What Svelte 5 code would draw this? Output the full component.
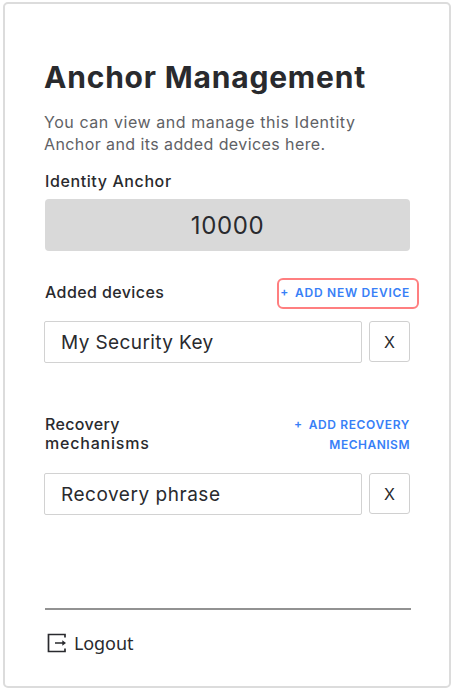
<script>
  const sections = [
    { id: 'devices', title: ['Added devices'], action: ['ADD NEW DEVICE'], item: 'My Security Key', highlighted: true },
    { id: 'recovery', title: ['Recovery', 'mechanisms'], action: ['ADD RECOVERY', 'MECHANISM'], item: 'Recovery phrase', highlighted: false }
  ];
</script>

<main class="card">
  <h1>Anchor Management</h1>
  <p class="intro"><span class="intro-a">You can view and manage this Identity</span><br /><span class="intro-b">Anchor and its added devices here.</span></p>
  <h2 class="anchor-label"><span>Identity Anchor</span></h2>
  <div class="anchor"><span>10000</span></div>

  {#each sections as section}
    <section class={section.id}>
      <header>
        <h2>{#each section.title as line}<span>{line}</span>{/each}</h2>
        <button class="add" class:highlighted={section.highlighted}>
          <i>+</i>
          <b>{#each section.action as line}<span>{line}</span>{/each}</b>
        </button>
      </header>
      <div class="row">
        <div class="item"><span>{section.item}</span></div>
        <button class="remove" aria-label="Remove">X</button>
      </div>
    </section>
  {/each}

  <footer>
    <svg width="20" height="20" viewBox="0 0 20 20" fill="none" stroke="#292a2e" stroke-width="1.7">
      <path d="M18 4.6V1.5H1.5v17H18v-3.1M8 10h8" />
      <path d="M15.3 7.2L19 10l-3.7 2.8z" fill="#292a2e" stroke="none" />
    </svg>
    <span>Logout</span>
  </footer>
</main>

<style>
  :global(body) { background: #fff; }
  * { box-sizing: border-box; }
  .card {
    width: 448px;
    height: 686px;
    margin: 2px 0 0 3px;
    padding: 54px 38px 0 40px;
    border: 2px solid #dcdcdc;
    border-radius: 5px;
    background: #fff;
    color: #292a2e;
    font-family: Inter, "Liberation Sans", sans-serif;
    display: flex;
    flex-direction: column;
  }
  h1, h2, p { margin: 0; white-space: nowrap; }
  h1 { height: 40px; line-height: 39px; font-size: 30px; font-weight: 700; letter-spacing: 0.8px; margin-left: -1px; }
  .intro { margin-top: 13px; height: 44px; font-size: 16px; line-height: 22px; font-weight: 400; color: #606165; letter-spacing: 0.56px; margin-left: -1px; }
  .intro-b { letter-spacing: 0.41px; }
  h2 { font-size: 16px; font-weight: 500; line-height: 19px; letter-spacing: 0.6px; }
  h2 span { display: block; }
  .anchor-label { margin-top: 17px; height: 27px; letter-spacing: 0.6px; }
  .anchor {
    width: 365px;
    height: 52px;
    flex: none;
    border-radius: 4px;
    background: #d9d9d9;
    display: flex;
    align-items: center;
    justify-content: center;
    font-size: 24px;
    font-weight: 400;
    letter-spacing: 0.6px;
  }
  section { width: 365px; }
  .devices { margin-top: 32px; }
  .devices h2 { letter-spacing: 0.4px; }
  .recovery { margin-top: 52px; }
  .recovery h2 span:first-child { letter-spacing: 0.35px; }
  .recovery h2 span:last-child { letter-spacing: 0.8px; }
  header { display: flex; justify-content: space-between; align-items: flex-start; }
  .devices header { height: 38px; }
  .recovery header { height: 58px; }
  button { font-family: inherit; padding: 0; background: none; color: inherit; }
  .add {
    display: flex;
    color: #387ff7;
    border: 1px solid transparent;
    height: 30px;
    padding: 4px 0;
    font-size: 12px;
    line-height: 20px;
    text-align: right;
    letter-spacing: 0.62px;
    margin: -5px -1px 0 0;
  }
  .add i { font-style: normal; font-weight: 600; margin-right: 6px; line-height: 18px; }
  .add b { font-weight: 600; }
  .add span { display: block; white-space: nowrap; }
  .add span:last-child:not(:first-child) { letter-spacing: 0.5px; }
  .highlighted { width: 142px; height: 31px; padding: 3px 7px 4px 0; justify-content: flex-end; border: 2px solid #ff7f80; border-radius: 6px; margin-right: -9px; letter-spacing: 0.72px; }
  .row { display: flex; justify-content: space-between; }
  .item {
    width: 318px;
    height: 42px;
    margin-left: -1px;
    padding: 1px 0 0 16px;
    display: flex;
    align-items: center;
    border: 1px solid #d2d2d2;
    border-radius: 2px;
    font-size: 19px;
    font-weight: 400;
    letter-spacing: 0.53px;
  }
  .devices .item { letter-spacing: 0.4px; }
  .remove { width: 41px; height: 41px; border: 1px solid #d0d0d0; border-radius: 3px; font-size: 16px; }
  footer {
    width: 366px;
    margin-top: 93px;
    border-top: 2px solid #929292;
    padding-top: 19px;
    display: flex;
    align-items: center;
    font: 450 18px/28px "Noto Sans", sans-serif;
  }
  footer svg { margin: 0 7px 0 2px; }
  footer span { letter-spacing: -0.1px; }
</style>
